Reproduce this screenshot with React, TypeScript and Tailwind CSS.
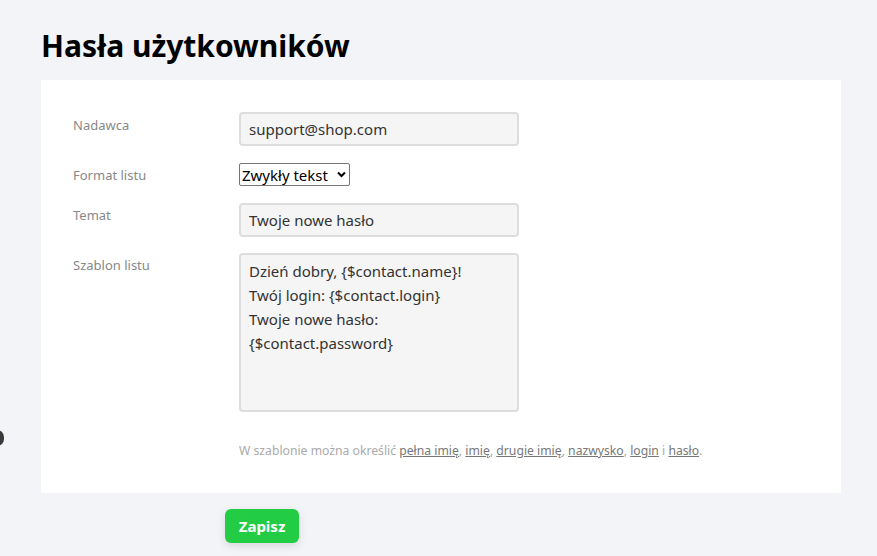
import React from "react";

export default function App() {
  const font = { fontFamily: '"Noto Sans", "Open Sans", sans-serif' };
  return (
    <div className="relative min-h-[556px] w-full bg-[#f3f4f8] text-[#333]" style={font}>
      <div className="absolute left-[-10px] top-[430px] h-[16px] w-[14px] rounded-full bg-[#3a3a3a]" />
      <div className="pl-[41px] pr-[36px] pt-[26px]">
        <h1 className="m-0 h-[54px] text-[30px] font-bold leading-[40px] text-black">
          Hasła użytkowników
        </h1>
        <div className="w-[800px] bg-white pl-[32px] pr-[32px] pt-[32px] pb-[34px]">
          <div className="flex items-start">
            <div className="w-[166px] pt-[5px] text-[13px] leading-[17px] text-[#888]">Nadawca</div>
            <div className="flex h-[34px] w-[280px] items-center rounded-[4px] border-2 border-[#dddddd] bg-[#f5f5f5] px-[8px] text-[15px] text-[#333]">
              support@shop.com
            </div>
          </div>
          <div className="mt-[17px] flex items-start">
            <div className="w-[166px] pt-[4px] text-[13px] leading-[17px] text-[#888]">Format listu</div>
            <div className="flex h-[23px] w-[111px] items-center rounded-[2px] border border-[#767676] bg-white pl-[2px] pr-[3px] text-[15px] text-black">
              <span className="flex-1 leading-[20px]">Zwykły tekst</span>
              <svg width="9" height="7" viewBox="0 0 9 7" className="ml-[1px]">
                <path d="M1 1.5 L4.5 5 L8 1.5" stroke="#000" strokeWidth="2" fill="none" />
              </svg>
            </div>
          </div>
          <div className="mt-[17px] flex items-start">
            <div className="w-[166px] pt-[4px] text-[13px] leading-[17px] text-[#888]">Temat</div>
            <div className="flex h-[34px] w-[280px] items-center rounded-[4px] border-2 border-[#dddddd] bg-[#f5f5f5] px-[8px] text-[15px] text-[#333]">
              Twoje nowe hasło
            </div>
          </div>
          <div className="mt-[16px] flex items-start">
            <div className="w-[166px] pt-[4px] text-[13px] leading-[17px] text-[#888]">Szablon listu</div>
            <div className="h-[159px] w-[280px] rounded-[4px] border-2 border-[#dddddd] bg-[#f5f5f5] px-[8px] pt-[4px] text-[15px] leading-[24px] text-[#333]">
              <div>Dzień dobry, {"{$contact.name}"}!</div>
              <div>Twój login: {"{$contact.login}"}</div>
              <div>Twoje nowe hasło:</div>
              <div>{"{$contact.password}"}</div>
            </div>
          </div>
          <div className="ml-[166px] mt-[31px] text-[12.2px] leading-[16px] text-[#aaa]">
            W szablonie można określić{" "}
            <span className="text-[#777] underline">pełna imię</span>,{" "}
            <span className="text-[#777] underline">imię</span>,{" "}
            <span className="text-[#777] underline">drugie imię</span>,{" "}
            <span className="text-[#777] underline">nazwysko</span>,{" "}
            <span className="text-[#777] underline">login</span> i{" "}
            <span className="text-[#777] underline">hasło</span>.
          </div>
        </div>
        <div className="ml-[184px] mt-[16px]">
          <button className="h-[34px] w-[74px] rounded-[6px] bg-[#22cc44] text-[15px] font-bold text-white shadow-[0_3px_8px_rgba(0,0,0,0.12)]">
            Zapisz
          </button>
        </div>
      </div>
    </div>
  );
}
